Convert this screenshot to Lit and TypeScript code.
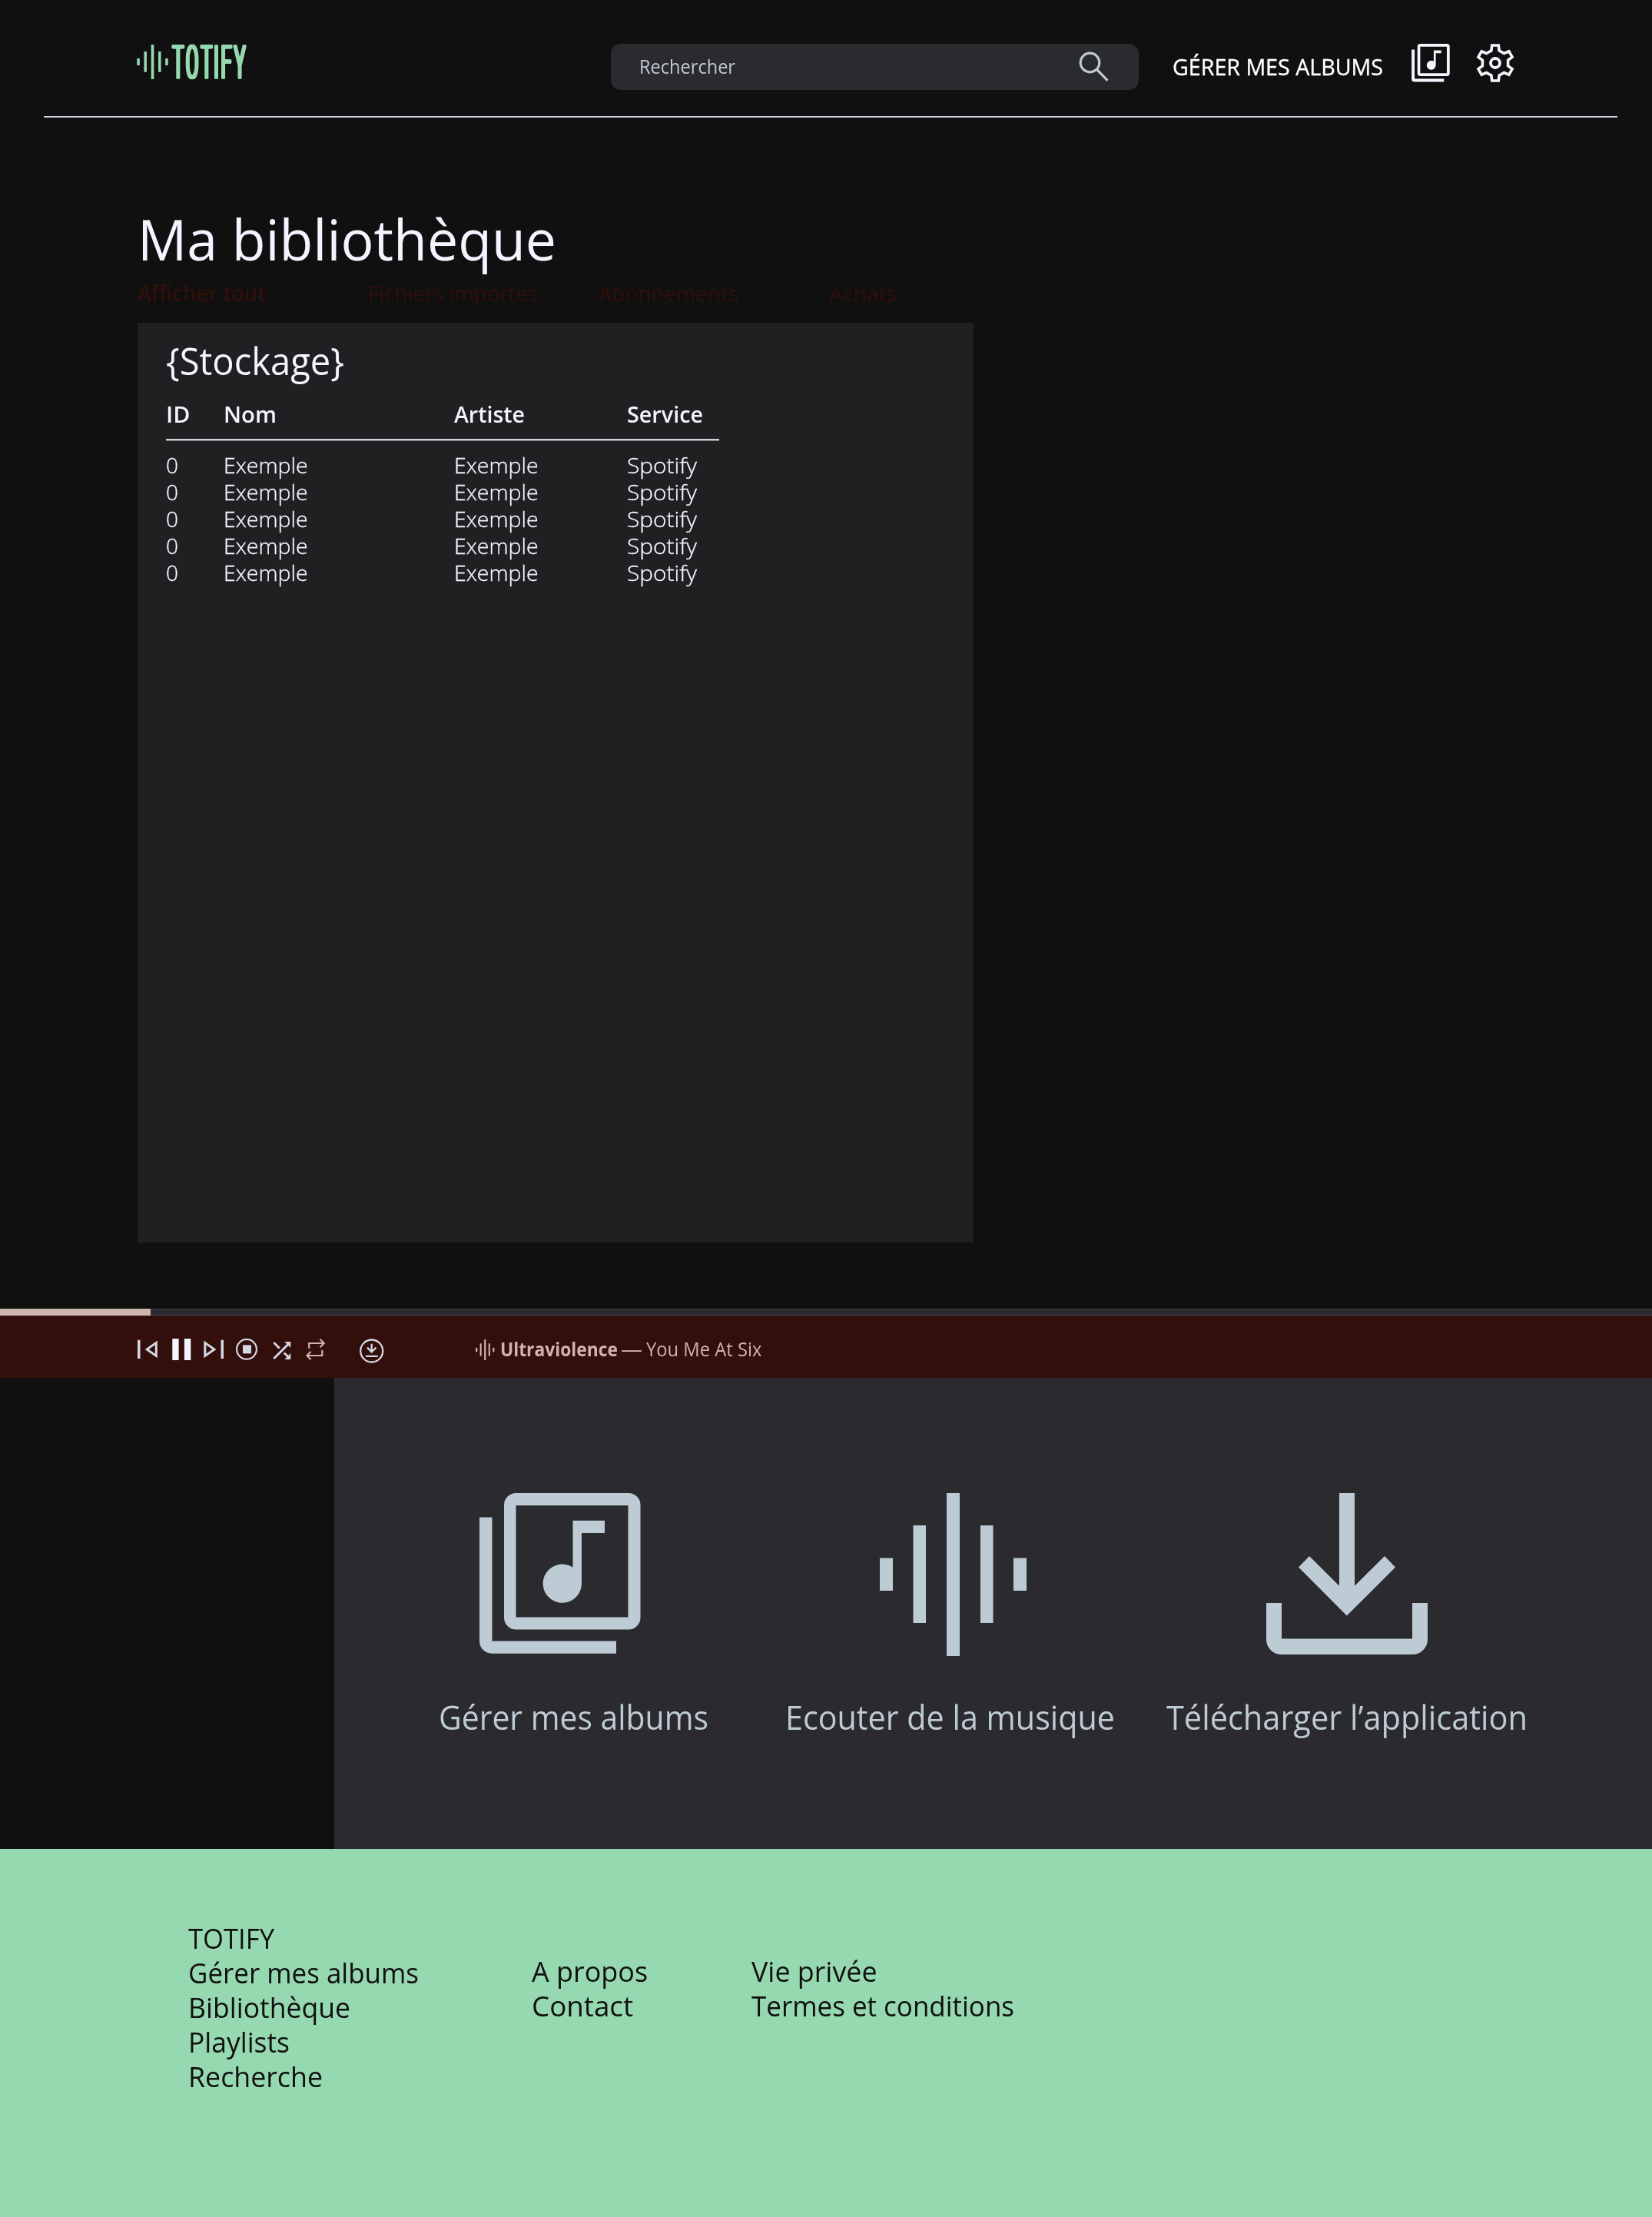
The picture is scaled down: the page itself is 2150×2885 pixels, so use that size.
import { LitElement, html, css, svg } from "lit";
import { customElement, property } from "lit/decorators.js";

/** A single line of text condensed or widened to a set measure. */
@customElement("fit-label")
class FitLabel extends LitElement {
  static styles = css`
    :host { display: inline-block; white-space: nowrap; vertical-align: top; }
    .run { display: inline-block; transform-origin: 0 50%; }
  `;
  @property() text = "";
  @property({ type: Number }) measure = 0;

  firstUpdated() {
    const run = this.renderRoot.querySelector(".run") as HTMLElement;
    const natural = run.getBoundingClientRect().width;
    this.style.width = `${this.measure}px`;
    run.style.transform = `scaleX(${this.measure / natural})`;
  }
  render() {
    return html`<span class="run">${this.text}</span>`;
  }
}

const label = (text: string, measure: number) =>
  html`<fit-label .text=${text} .measure=${measure}></fit-label>`;

const wave = (cls: string) => html`
  <svg class="wave ${cls}" viewBox="0 0 191 212" fill="currentColor">
    <path d="M0 84.5h17v42.5H0zM43.5 42h16.5v127h-16.5zM87 0h17v212H87zM131 42h16.5v127H131zM174 84.5h17v42.5h-17z" />
  </svg>`;

const library = (cls: string) => html`
  <svg class="library ${cls}" viewBox="0 0 210 209" fill="currentColor">
    <path fill-rule="evenodd" d="M47.500 0H194A15.500 15.500 0 0 1 209.500 15.500V162A15.500 15.500 0 0 1 194 177.500H47.500A15.500 15.500 0 0 1 32 162V15.500A15.500 15.500 0 0 1 47.500 0ZM47.500 16V161.500H193.500V16Z" />
    <path d="M0 31.500H16.500V192.500H178V208.700H16A16 16 0 0 1 0 193Z" />
    <path d="M121.500 35.700H163V52H133V117.500A25.200 25.200 0 1 1 121.500 96.500Z" />
  </svg>`;

const download = html`
  <svg class="download" viewBox="0 0 210 210" fill="currentColor">
    <path d="M95 0H115V120.700L154 82 168 96.500 104.800 159.500 42 96.500 56 82 95 120.700Z" />
    <path d="M0 143H20V189.500H190V143H210V190A19.500 19.500 0 0 1 190.500 210H19.500A19.500 19.500 0 0 1 0 190Z" />
  </svg>`;

/** Six-toothed cog traced around its centre. */
const gearPath = (() => {
  const tooth = [[-5.1, -16.2], [-4.3, -23], [4.3, -23], [5.1, -16.2]];
  const points: string[] = [];
  for (let i = 0; i < 6; i++) {
    const a = (i * Math.PI) / 3;
    for (const [x, y] of tooth) {
      const px = x * Math.cos(a) - y * Math.sin(a);
      const py = x * Math.sin(a) + y * Math.cos(a);
      points.push(`${px.toFixed(2)} ${py.toFixed(2)}`);
    }
  }
  return `M${points.join("L")}Z`;
})();

const gear = html`
  <svg class="gear" viewBox="-25 -25 50 50" fill="none" stroke="currentColor" stroke-width="3.6">
    <path d=${gearPath} />
    <circle r="6" stroke-width="3.8" />
  </svg>`;

const control = (cls: string, width: number, body: unknown) => html`
  <svg class="control ${cls}" width=${width} height="34" viewBox="0 0 ${width} 34" fill="currentColor">${body}</svg>`;

const controls = [
  control("", 27, svg`<rect y="3.700" width="3.500" height="24.300"/><path d="M24.300 7.300V24.400L12.200 15.900Z" fill="none" stroke="currentColor" stroke-width="3"/>`),
  control("bright", 25, svg`<path d="M.3 2H8.600V30H.3ZM15.900 2H24.300V30H15.900Z"/>`),
  control("", 27, svg`<path d="M1.800 7.300V24.400L13.900 15.900Z" fill="none" stroke="currentColor" stroke-width="3"/><rect x="22.500" y="3.700" width="3.500" height="24.300"/>`),
  control("", 29, svg`<circle cx="14" cy="15.800" r="12.900" fill="none" stroke="currentColor" stroke-width="2.200"/><rect x="9" y="10.300" width="11" height="11"/>`),
  control("", 24, svg`<path transform="translate(-5.500 .2) scale(1.4375)" d="M10.590 9.170 5.410 4 4 5.410l5.170 5.170 1.420-1.410zM14.500 4l2.040 2.040L4 18.590 5.410 20 17.960 7.460 20 9.500V4h-5.500zm.33 9.410-1.410 1.410 3.130 3.130L14.500 20H20v-5.500l-2.040 2.040-3.130-3.130z"/>`),
  control("blush", 26, svg`<path d="M4.200 14.700V8H23.500M18.500 2.800 23.700 8 18.500 13.200M21.300 17V24H2.200M6.500 18.800 1.500 24 6.500 29.200" fill="none" stroke="currentColor" stroke-width="2.200"/>`),
  control("", 32, svg`<g fill="none" stroke="currentColor" stroke-width="2.300"><circle cx="15.700" cy="18" r="14.500"/><path d="M15.700 8.700V19.500M10 13.600 15.700 19.400 21.400 13.600M8 24.800H23.700"/></g>`),
];

const tabs: [string, number][] = [["Afficher tout", 167], ["Fichiers importés", 221], ["Abonnements", 182], ["Achats", 88]];
const headings: [string, number][] = [["ID", 31.5], ["Nom", 69], ["Artiste", 92], ["Service", 99]];
const track: [string, number][] = [["0", 16], ["Exemple", 109.5], ["Exemple", 109.5], ["Spotify", 91]];
const tracks = Array.from({ length: 5 }, () => track);
const footer: [string, number][][] = [
  [["TOTIFY", 112], ["Gérer mes albums", 300], ["Bibliothèque", 211], ["Playlists", 132], ["Recherche", 175]],
  [["A propos", 151], ["Contact", 132]],
  [["Vie privée", 163.5], ["Termes et conditions", 342]],
];

@customElement("app-root")
class AppRoot extends LitElement {
  static styles = css`
    :host {
      display: block; width: 2150px; height: 2885px; overflow: hidden;
      background: #101010; color: #f4f4ff;
      font-family: "Open Sans", "Noto Sans", sans-serif;
    }
    svg { display: block; flex: none; overflow: visible; }
    h1, h2, ul { margin: 0; padding: 0; font-weight: 400; list-style: none; }

    .header { display: flex; align-items: flex-start; height: 94px; padding: 57px 0 0 178px; }
    .logo { display: flex; gap: 4px; width: 617px; padding-top: 1px; color: #96d9b0; }
    .wave.mark { width: 41px; height: 45px; }
    .wordmark {
      width: 102px; height: 46px;
      filter: drop-shadow(1.7px 0 0 #96d9b0) drop-shadow(-1.7px 0 0 #96d9b0);
    }
    .wordmark text {
      font-family: Roboto, "Open Sans", sans-serif; font-weight: 100; font-size: 57px;
      fill: currentColor; stroke: currentColor; stroke-width: 3.6px; stroke-linejoin: round;
    }
    .search {
      display: flex; justify-content: space-between; width: 610px; height: 60px;
      padding: 0 40px 0 37px; border-radius: 13px;
      background: #2b2a2e; color: #bdcbd4; font-size: 24.8px; line-height: 59px;
    }
    .search-icon { width: 38px; height: 39px; margin-top: 10px; }
    .nav-link { margin-left: 43.5px; font-size: 29px; line-height: 60px; color: #fff; font-weight: 500; -webkit-text-stroke: .35px #fff; }
    .library.small { width: 50px; height: 49.5px; margin-left: 37.5px; }
    .gear { width: 50px; height: 50px; margin-left: 34px; }
    .rule { height: 2px; margin: 0 45px 0 57px; background: #ced1e0; }

    .main { height: 1442px; padding: 108px 0 0 179px; }
    .title { font-size: 74px; line-height: 100px; }
    .tabs { display: flex; margin: 1px 0 20px; color: #320f0a; font-size: 28px; line-height: 38px; }
    .tab { width: 300px; }
    .tab.active { font-weight: 600; }
    .panel { width: 1051px; height: 1180px; padding: 17px 0 0 37px; background: #202022; }
    .panel-title { font-size: 48.5px; line-height: 64px; }
    .row { display: grid; grid-template-columns: 75px 300px 225px 120px; width: 720px; font-size: 27.5px; line-height: 35px; font-weight: 300; -webkit-text-stroke: .3px #f4f4ff; }
    .row.head { margin-top: 18px; padding-bottom: 12px; font-size: 28.3px; line-height: 40px; font-weight: 600; -webkit-text-stroke: 0; }
    .divider { width: 720px; height: 1px; margin-bottom: 14px; background: #f4f4ff; border-top: 1px solid #b4b4bc; border-bottom: 1px solid #66666c; }

    .progress { height: 7px; background: #2b2a2e; border: solid #474548; border-width: 1px 0; }
    .played { width: 196px; height: 9px; margin-top: -1px; background: #d0b3aa; }
    .player {
      display: grid; grid-template-columns: 44.5px 41.5px 42px 47.5px 43px 70px 151.5px 32px 157px 33px auto;
      align-items: start; height: 53px; padding: 28px 0 0 179px;
      background: #320f0a; color: #d5d6e6; font-size: 24.8px; line-height: 31px;
    }
    .bright { color: #f4f4ff; }
    .blush { color: #d0b3aa; }
    .wave.playing { width: 24.5px; height: 27px; margin-top: 2.5px; }
    .song { font-weight: 700; }

    .promo { display: flex; align-items: flex-start; height: 463px; margin-left: 435px; padding: 150px 0 0 136px; background: #2b2a2e; color: #bdcbd4; }
    .card { width: 451px; font-size: 43px; line-height: 56px; }
    .card.wide { width: 496px; }
    .figure { height: 212px; margin-bottom: 52px; }
    .library.large { width: 210px; height: 209px; margin-left: 53px; }
    .wave.large { width: 191px; height: 212px; margin-left: 123px; }
    .download { width: 210px; height: 210px; margin-left: 130px; }

    .footer { display: grid; grid-template-columns: 447px 286px auto; height: 385px; padding: 94px 0 0 245px; background: #96d9b0; color: #101010; font-size: 36.8px; line-height: 45px; }
    .links + .links { margin-top: 43px; }
    .link { height: 45px; }
  `;

  render() {
    return html`
      <header class="header">
        <div class="logo">
          ${wave("mark")}
          <svg class="wordmark" viewBox="0 0 102 46">
            <text transform="scale(.4 1)" y="43" x="6 50 99 140 164 207">TOTIFY</text>
          </svg>
        </div>
        <div class="search">
          ${label("Rechercher", 125)}
          <svg class="search-icon" viewBox="0 0 38 39" fill="none" stroke="currentColor" stroke-width="3.2">
            <circle cx="14.5" cy="14.5" r="12.3" /><path d="M23.2 23.2 37.5 37.8" />
          </svg>
        </div>
        <div class="nav-link">${label("GÉRER MES ALBUMS", 274)}</div>
        ${library("small")} ${gear}
      </header>
      <div class="rule"></div>

      <main class="main">
        <h1 class="title">${label("Ma bibliothèque", 545)}</h1>
        <nav class="tabs">
          ${tabs.map(([t, w], i) => html`<div class="tab ${i ? "" : "active"}">${label(t, w)}</div>`)}
        </nav>
        <section class="panel">
          <h2 class="panel-title">${label("{Stockage}", 232)}</h2>
          <div class="row head">${headings.map(([t, w]) => label(t, w))}</div>
          <div class="divider"></div>
          ${tracks.map((cells) => html`<div class="row">${cells.map(([t, w]) => label(t, w))}</div>`)}
        </section>
      </main>

      <div class="progress"><div class="played"></div></div>
      <div class="player">
        ${controls}
        <div class="blush">${wave("playing")}</div>
        <div class="song blush">${label("Ultraviolence", 153)}</div>
        <div class="blush">${label("—", 28)}</div>
        <div class="blush">${label("You Me At Six", 150.5)}</div>
      </div>

      <section class="promo">
        <div class="card"><div class="figure">${library("large")}</div>${label("Gérer mes albums", 351)}</div>
        <div class="card wide"><div class="figure">${wave("large")}</div>${label("Ecouter de la musique", 429)}</div>
        <div class="card wide"><div class="figure">${download}</div>${label("Télécharger l’application", 470)}</div>
      </section>

      <footer class="footer">
        ${footer.map((links) => html`<ul class="links">${links.map(([t, w]) => html`<li class="link">${label(t, w)}</li>`)}</ul>`)}
      </footer>
    `;
  }
}
